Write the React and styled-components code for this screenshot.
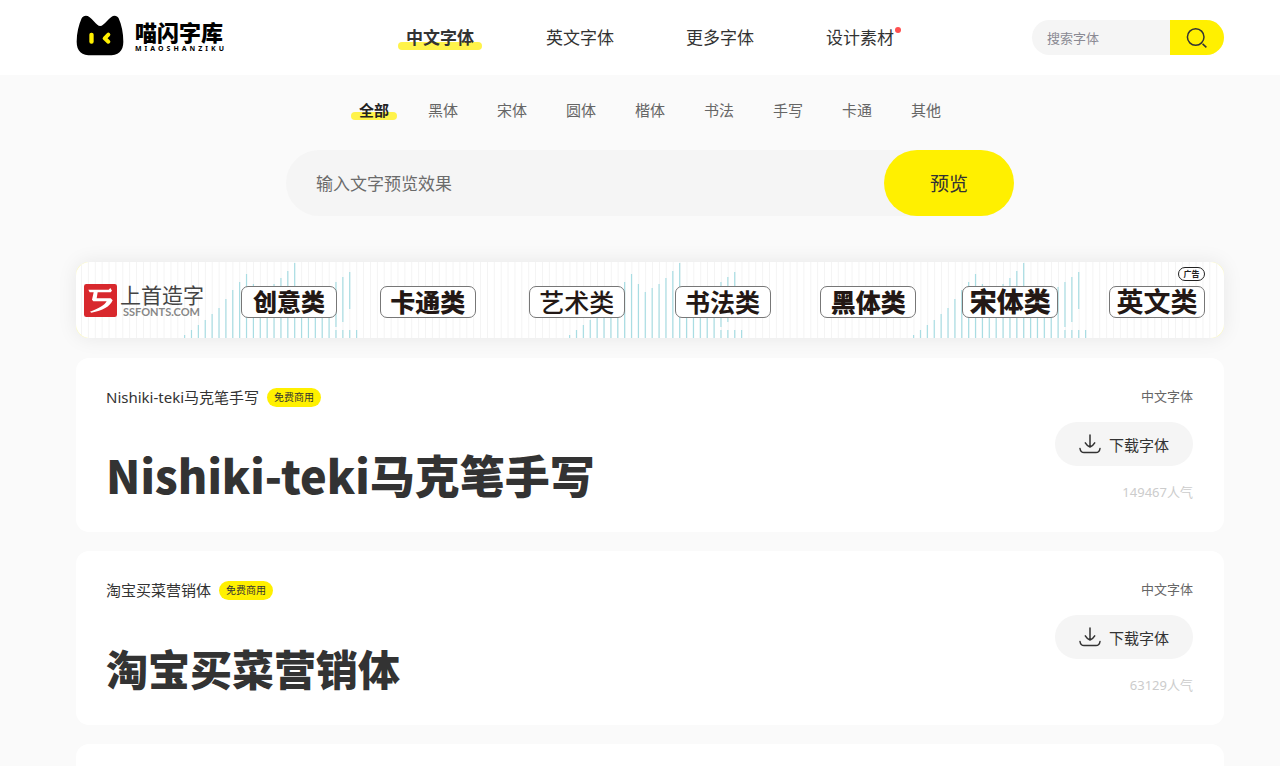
import React, { useState } from "react";
import styled, { createGlobalStyle } from "styled-components";

const GlobalStyle = createGlobalStyle`
  * {
    box-sizing: border-box;
  }
  body {
    margin: 0;
    background: #fafafa;
    color: #333;
    font-family: "Noto Sans", "Noto Sans CJK SC", sans-serif;
  }
  a {
    color: inherit;
    text-decoration: none;
  }
  button, input {
    font-family: inherit;
    border: none;
    outline: none;
  }
  button {
    padding: 0;
    cursor: pointer;
    color: #333;
  }
`;

const navItems = [
  { name: "中文字体", active: true },
  { name: "英文字体" },
  { name: "更多字体" },
  { name: "设计素材", dot: true },
];

const categories = ["全部", "黑体", "宋体", "圆体", "楷体", "书法", "手写", "卡通", "其他"];

const adTypes = [
  { name: "创意类", size: 24, weight: 900 },
  { name: "卡通类", size: 25, weight: 900 },
  { name: "艺术类", size: 25, weight: 500 },
  { name: "书法类", size: 25, weight: 700 },
  { name: "黑体类", size: 25, weight: 900 },
  { name: "宋体类", size: 27, weight: 900 },
  { name: "英文类", size: 27, weight: 700 },
];

const fonts = [
  { name: "Nishiki-teki马克笔手写", size: 45, hot: 149467 },
  { name: "淘宝买菜营销体", size: 42, hot: 63129 },
];

// top / bottom of every bar in the banner, one entry per step
const bars = [
  [73, 76], [68, 76], [63, 76], [58, 76], [52, 76], [46, 76], [37, 76], [28, 76],
  [20, 76], [12, 76], [22, 76], [30, 76], [26, 76], [22, 76], [16, 76], [9, 76],
  [1, 76], [30, 76], [30, 76], [30, 76], [30, 76], [25, 76], [20, 65], [15, 60],
  [10, 47], [68, 76],
];
const lowBars = [22, 23, 24];
const STEP = 6.88;

const CatLogo = () => (
  <svg width="48" height="41" viewBox="0 0 144 123" aria-hidden="true">
    <path d="M17 10C21 1 33 0 40 6C50 14 58 24 64 29C69 34 76 34 81 29C88 24 96 14 106 6C113 0 124 1 128 10C137 30 142 54 142 80C142 109 127 121 96 121H48C17 121 2 109 2 80C2 54 8 30 17 10Z" />
    <rect x="40" y="53" width="13" height="33" rx="6" fill="#fff000" />
    <path d="M97 59L86 70L97 80" fill="none" stroke="#fff000" strokeWidth="12" strokeLinecap="round" strokeLinejoin="round" />
  </svg>
);

const SearchIcon = () => (
  <svg width="22" height="22" viewBox="0 0 22 22" fill="none" stroke="#333" strokeWidth="1.5" aria-hidden="true">
    <circle cx="9.7" cy="10" r="8.3" />
    <path d="M16.6 16.9L20.4 20.4" />
  </svg>
);

const DownloadIcon = () => (
  <svg width="22" height="20" viewBox="0 0 22 20" fill="none" stroke="#333" strokeWidth="1.5" strokeLinecap="round" aria-hidden="true">
    <path d="M11 1V13M6.3 8.8C7.6 11 9.2 12.2 11 13C12.8 12.2 14.4 11 15.7 8.8" />
    <path d="M1 14.5C1.4 17.2 2.4 18.6 5 18.6H17C19.6 18.6 20.6 17.2 21 14.5" />
  </svg>
);

const AdMark = () => (
  <svg width="33" height="33" viewBox="0 0 99 99" aria-hidden="true">
    <rect width="99" height="99" rx="7" fill="#d8282d" />
    <path d="M13 17H74L79 12L84 20L80 25H41L38 43H80L86 49C78 68 56 80 22 86L18 83C44 74 61 64 68 52H28L24 47L29 25H17Z" fill="#fff" />
  </svg>
);

const AdBars = () => (
  <BarsSvg viewBox="0 0 1148 76" preserveAspectRatio="none" aria-hidden="true">
    {Array.from({ length: 166 }, (_, i) => (
      <rect key={i} x={5 + i * STEP} y="0" width="1" height="76" fill="#f4f4f4" />
    ))}
    {[108, 493, 837].map((start) => (
      <g key={start} fill="#a9dde3">
        {bars.map(([top, bottom], i) => (
          <rect key={i} x={start + i * STEP} y={top} width="1.2" height={bottom - top} />
        ))}
        {lowBars.map((i) => (
          <rect key={i} x={start + i * STEP} y="68" width="1.2" height="8" />
        ))}
      </g>
    ))}
  </BarsSvg>
);

const App = () => {
  const [category, setCategory] = useState("全部");
  const [text, setText] = useState("");
  const stop = (e) => e.preventDefault();

  return (
    <>
      <GlobalStyle />
      <Header>
        <Logo href="#">
          <CatLogo />
          <LogoText>
            <LogoName>喵闪字库</LogoName>
            <LogoSub>MIAOSHANZIKU</LogoSub>
          </LogoText>
        </Logo>
        <Nav>
          {navItems.map((item) => (
            <NavLink key={item.name} href="#" $active={item.active}>
              {item.name}
              {item.dot && <Dot />}
            </NavLink>
          ))}
        </Nav>
        <Search onSubmit={stop}>
          <SearchInput aria-label="搜索字体" placeholder="搜索字体" />
          <SearchButton aria-label="搜索">
            <SearchIcon />
          </SearchButton>
        </Search>
      </Header>

      <Main>
        <Categories>
          {categories.map((name) => (
            <Category key={name} type="button" $active={name === category} onClick={() => setCategory(name)}>
              {name}
            </Category>
          ))}
        </Categories>

        <Preview onSubmit={stop}>
          <PreviewInput
            aria-label="输入文字预览效果"
            placeholder="输入文字预览效果"
            value={text}
            onChange={(e) => setText(e.target.value)}
          />
          <PreviewButton>预览</PreviewButton>
        </Preview>

        <Banner href="#">
          <AdBars />
          <AdLogo>
            <AdMark />
            <AdText>
              <AdName>上首造字</AdName>
              <AdSite>SSFONTS.COM</AdSite>
            </AdText>
          </AdLogo>
          <AdList>
            {adTypes.map((ad) => (
              <AdType key={ad.name} $size={ad.size} $weight={ad.weight}>
                {ad.name}
              </AdType>
            ))}
          </AdList>
          <AdBadge>广告</AdBadge>
        </Banner>

        <List>
          {fonts.map((font) => (
            <Card key={font.name}>
              <CardInfo>
                <CardTitle>
                  <a href="#">{font.name}</a>
                  <Tag>免费商用</Tag>
                </CardTitle>
                <Sample $size={font.size}>{text || font.name}</Sample>
              </CardInfo>
              <CardSide>
                <Kind>中文字体</Kind>
                <Download type="button">
                  <DownloadIcon />
                  下载字体
                </Download>
                <Hot>{font.hot}人气</Hot>
              </CardSide>
            </Card>
          ))}
          <Card />
        </List>
      </Main>
    </>
  );
};

const Header = styled.header`
  display: grid;
  grid-template-columns: 1fr auto 1fr;
  align-items: center;
  height: 75px;
  padding: 0 56px 0 76px;
  background: #fff;
`;

const Logo = styled.a`
  display: flex;
  align-items: center;
  gap: 11px;
  color: #000;
  padding-bottom: 4px;
`;

const LogoText = styled.div`
  display: flex;
  flex-direction: column;
`;

const LogoName = styled.span`
  font-family: "Noto Sans CJK SC", sans-serif;
  font-size: 22px;
  line-height: 26px;
  font-weight: 900;
`;

const LogoSub = styled.span`
  font-size: 7px;
  line-height: 10px;
  font-weight: 700;
  letter-spacing: 3px;
`;

const Nav = styled.nav`
  display: flex;
  gap: 72px;
`;

const NavLink = styled.a`
  position: relative;
  z-index: 0;
  font-size: 17px;
  line-height: 24px;
  font-weight: ${(props) => (props.$active ? 700 : 400)};

  &::after {
    content: "";
    display: ${(props) => (props.$active ? "block" : "none")};
    position: absolute;
    z-index: -1;
    left: -8px;
    right: -8px;
    bottom: 0;
    height: 8px;
    border-radius: 4px;
    background: #fff34a;
  }
`;

const Dot = styled.i`
  position: absolute;
  top: 1px;
  right: -7px;
  width: 6px;
  height: 6px;
  border-radius: 50%;
  background: #ff5050;
`;

const Search = styled.form`
  justify-self: end;
  display: flex;
  width: 192px;
  height: 35px;
  border-radius: 18px;
  overflow: hidden;
  background: #f5f5f5;
`;

const SearchInput = styled.input`
  flex: 1;
  min-width: 0;
  padding: 0 15px;
  background: none;
  font-size: 13px;

  &::placeholder {
    color: #8a8a93;
  }
`;

const SearchButton = styled.button`
  display: flex;
  align-items: center;
  justify-content: center;
  width: 54px;
  background: #fff000;
`;

const Main = styled.main`
  padding: 23px 56px 0 76px;
`;

const Categories = styled.div`
  display: flex;
  justify-content: center;
  gap: 39px;
`;

const Category = styled.button`
  position: relative;
  z-index: 0;
  background: none;
  font-size: 15px;
  line-height: 24px;
  font-weight: ${(props) => (props.$active ? 700 : 400)};
  color: ${(props) => (props.$active ? "#222" : "#666")};

  &::after {
    content: "";
    display: ${(props) => (props.$active ? "block" : "none")};
    position: absolute;
    z-index: -1;
    left: -8px;
    right: -8px;
    bottom: 2px;
    height: 8px;
    border-radius: 4px;
    background: #fff34a;
  }
`;

const Preview = styled.form`
  display: flex;
  width: 728px;
  max-width: 100%;
  height: 66px;
  margin: 28px auto 0;
  border-radius: 33px;
  background: #f5f5f5;
`;

const PreviewInput = styled.input`
  flex: 1;
  min-width: 0;
  padding: 0 30px;
  background: none;
  font-size: 17px;

  &::placeholder {
    color: #6b6b6b;
  }
`;

const PreviewButton = styled.button`
  width: 130px;
  border-radius: 33px;
  background: #fff000;
  font-size: 19px;
`;

const Banner = styled.a`
  position: relative;
  display: flex;
  align-items: center;
  gap: 36px;
  height: 76px;
  margin-top: 46px;
  padding: 0 19px 0 8px;
  border-radius: 13px;
  background: #fffbb0;
  box-shadow: 0 0 20px rgba(0, 0, 0, 0.08);
`;

const BarsSvg = styled.svg`
  position: absolute;
  top: 0;
  left: 0;
  width: 100%;
  height: 100%;
  border-radius: 14px;
  background: #fff;
`;

const AdLogo = styled.div`
  position: relative;
  display: flex;
  align-items: center;
  gap: 3px;
  width: 121px;
`;

const AdText = styled.div`
  display: flex;
  flex-direction: column;
  padding-top: 2px;
`;

const AdName = styled.span`
  font-family: "Noto Sans CJK SC", sans-serif;
  font-size: 21px;
  line-height: 22px;
  color: #444;
`;

const AdSite = styled.span`
  padding-left: 3px;
  font-family: "Lato", sans-serif;
  font-size: 11px;
  line-height: 14px;
  font-weight: 700;
  color: #888;
`;

const AdList = styled.div`
  position: relative;
  flex: 1;
  display: grid;
  grid-template-columns: 139fr 149fr 146fr 146fr 142fr 147fr 96px;
  padding-top: 4px;
`;

const AdType = styled.span`
  display: flex;
  align-items: center;
  justify-content: center;
  width: 96px;
  height: 32px;
  padding-bottom: 2px;
  border: 1px solid #777;
  border-radius: 7px;
  background: #fff;
  color: #231815;
  font-family: "Noto Sans CJK SC", sans-serif;
  font-size: ${(props) => props.$size}px;
  line-height: 28px;
  font-weight: ${(props) => props.$weight};
`;

const AdBadge = styled.span`
  position: absolute;
  top: 5px;
  right: 19px;
  width: 27px;
  height: 14px;
  border: 1px solid #222;
  border-radius: 7px;
  background: #fff;
  color: #222;
  font-size: 8px;
  line-height: 12px;
  font-weight: 700;
  text-align: center;
`;

const List = styled.div`
  display: flex;
  flex-direction: column;
  gap: 19px;
  margin-top: 20px;
`;

const Card = styled.article`
  display: flex;
  justify-content: space-between;
  min-height: 174px;
  padding: 28px 31px 26px 30px;
  border-radius: 13px;
  background: #fff;
`;

const CardInfo = styled.div`
  display: flex;
  flex-direction: column;
  gap: 37px;
`;

const CardTitle = styled.div`
  display: flex;
  align-items: center;
  gap: 8px;
  font-size: 15px;
  line-height: 22px;
`;

const Tag = styled.span`
  height: 19px;
  padding: 0 7px;
  border-radius: 10px;
  background: #fff000;
  font-size: 10px;
  line-height: 19px;
`;

const Sample = styled.div`
  font-family: "Noto Sans CJK SC", sans-serif;
  font-size: ${(props) => props.$size}px;
  line-height: 60px;
  font-weight: 900;
`;

const CardSide = styled.div`
  display: flex;
  flex-direction: column;
  align-items: flex-end;
  gap: 16px;
  font-size: 13px;
  line-height: 20px;
`;

const Kind = styled.span`
  color: #666;
`;

const Download = styled.button`
  display: flex;
  align-items: center;
  justify-content: center;
  gap: 8px;
  width: 138px;
  height: 44px;
  border-radius: 22px;
  background: #f5f5f5;
  font-size: 15px;
`;

const Hot = styled.span`
  color: #ccc;
`;

export default App;
